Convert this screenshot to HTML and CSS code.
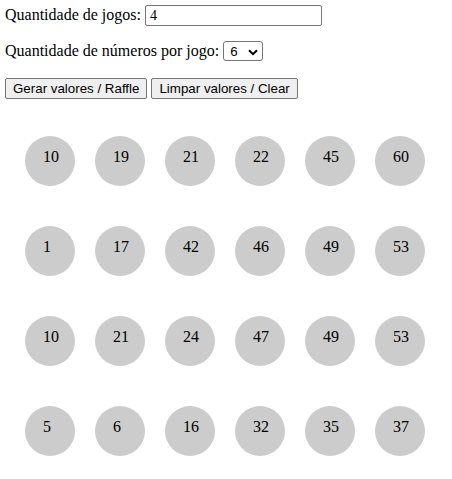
FILE: index.html
```html
<!DOCTYPE html>
<html lang="pt">
<head>
<meta charset="utf-8">
<title>Sorteio</title>
<link rel="stylesheet" href="styles.css">
</head>
<body>
<div class="field field-games">
  <label for="jogos">Quantidade de jogos:</label>
  <input id="jogos" class="text-input" type="text" value="4">
</div>
<div class="field field-numbers">
  <label for="numeros">Quantidade de números por jogo:</label>
  <span class="select-wrap">
    <select id="numeros" class="select">
      <option>6</option>
      <option>7</option>
      <option>8</option>
    </select>
    <svg class="chevron" width="10" height="7" viewBox="0 0 10 7" aria-hidden="true"><path d="M1 1.2 L5 5.2 L9 1.2" fill="none" stroke="#000" stroke-width="2"/></svg>
  </span>
</div>
<div class="actions">
  <button class="btn" type="button">Gerar valores / Raffle</button>
  <button class="btn" type="button">Limpar valores / Clear</button>
</div>
<div class="balls">
  <div class="ball">10</div><div class="ball">19</div><div class="ball">21</div><div class="ball">22</div><div class="ball">45</div><div class="ball">60</div>
  <div class="ball">1</div><div class="ball">17</div><div class="ball">42</div><div class="ball">46</div><div class="ball">49</div><div class="ball">53</div>
  <div class="ball">10</div><div class="ball">21</div><div class="ball">24</div><div class="ball">47</div><div class="ball">49</div><div class="ball">53</div>
  <div class="ball">5</div><div class="ball">6</div><div class="ball">16</div><div class="ball">32</div><div class="ball">35</div><div class="ball">37</div>
</div>
</body>
</html>
```

FILE: styles.css
```css
html, body {
  background: #fff;
}
body {
  margin: 0;
  padding: 5px;
  font-family: "Liberation Serif", "Times New Roman", serif;
  font-size: 16px;
  color: #000;
}
.field {
  display: flex;
  align-items: baseline;
  gap: 4px;
}
.field-games {
  margin-bottom: 15px;
}
.field-numbers {
  margin-bottom: 18px;
}
.text-input {
  box-sizing: border-box;
  width: 177px;
  height: 21px;
  margin: 0;
  padding: 1px 4px;
  border: 1px solid #767676;
  border-radius: 2px;
  font-family: "Liberation Serif", "Times New Roman", serif;
  font-size: 14px;
  color: #000;
  background: #fff;
}
.select-wrap {
  position: relative;
  display: inline-flex;
}
.select {
  -webkit-appearance: none;
  appearance: none;
  box-sizing: border-box;
  width: 40px;
  height: 20px;
  margin: 0;
  padding: 0 0 0 6px;
  border: 1px solid #767676;
  border-radius: 3px;
  background: #fff;
  font-family: "Liberation Sans", Arial, sans-serif;
  font-size: 13.33px;
  color: #000;
}
.chevron {
  position: absolute;
  left: 25px;
  top: 8px;
  pointer-events: none;
}
.actions {
  display: flex;
  gap: 4px;
  margin-top: -1px;
  margin-bottom: 37px;
}
.btn {
  box-sizing: border-box;
  height: 21px;
  margin: 0;
  padding: 0 7px;
  border: 1px solid #767676;
  border-radius: 2px;
  background: #efefef;
  font-family: "Liberation Sans", Arial, sans-serif;
  font-size: 13.33px;
  color: #000;
}
.balls {
  display: grid;
  grid-template-columns: repeat(6, 50px);
  column-gap: 20px;
  row-gap: 40px;
  margin-left: 20px;
}
.ball {
  box-sizing: border-box;
  width: 50px;
  height: 50px;
  padding: 12px 0 0 18px;
  border-radius: 50%;
  background: #ccc;
  line-height: normal;
}
```
